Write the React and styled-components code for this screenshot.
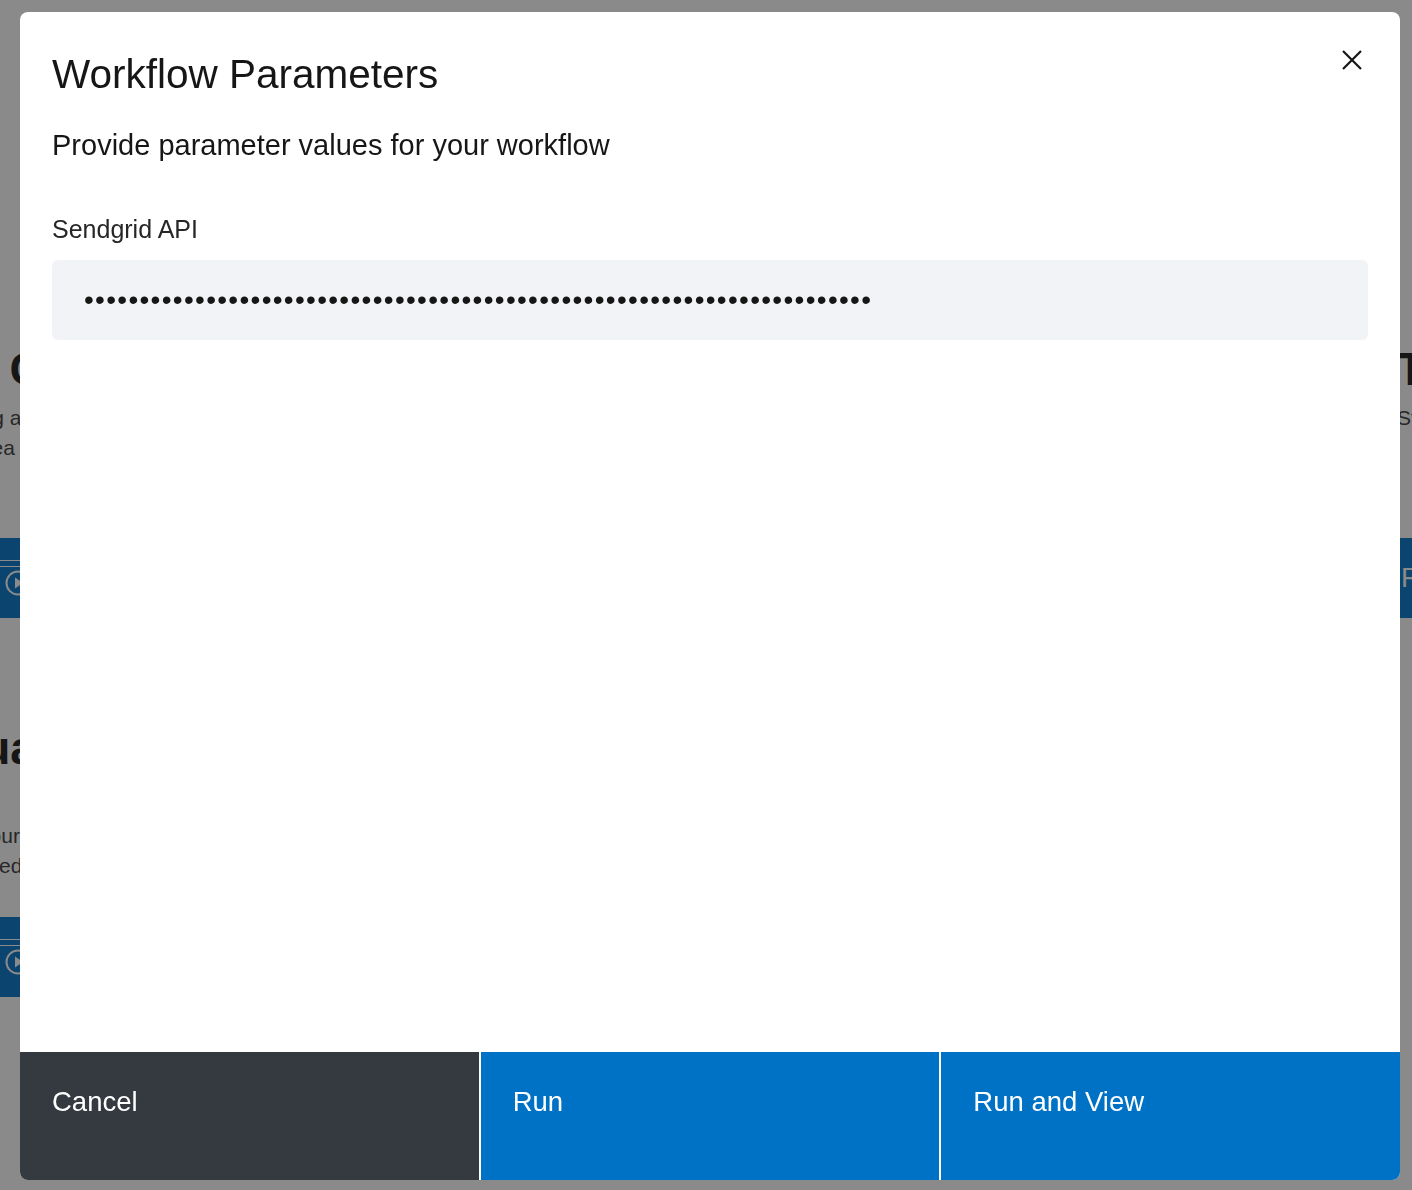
import React from 'react';
import styled, { createGlobalStyle } from 'styled-components';

const GlobalStyle = createGlobalStyle`
  html, body { margin: 0; padding: 0; }
  body {
    font-family: "Liberation Sans", Arial, sans-serif;
    color: #161616;
    background: #fff;
    overflow: hidden;
  }
  * { box-sizing: border-box; }
`;

// page behind the dialog, only its edges show
const Page = styled.div`
  width: 100vw;
  height: 100vh;
  overflow: hidden;
  display: flex;
  justify-content: center;
  gap: 24px;
  padding-top: 334px;
`;

const Column = styled.div`
  flex: 0 0 ${props => props.$width}px;
  min-width: 0;
  display: flex;
  flex-direction: column;
  gap: 95px;
`;

const Card = styled.div`
  height: 284px;
  display: flex;
  flex-direction: column;
`;

const CardTitle = styled.h3`
  margin: 0;
  padding: 7px 20px 0;
  font-size: 46px;
  line-height: 56px;
  font-weight: 700;
  white-space: nowrap;
  color: #161616;
`;

const CardText = styled.p`
  margin: ${props => props.$lead}px 0 0;
  padding: 0 6px 0 20px;
  font-size: 21px;
  line-height: 30px;
  color: #393939;
`;

const CardButton = styled.a`
  margin-top: auto;
  height: 80px;
  background: #0072c6;
  color: #fff;
  font-size: 27.5px;
  display: flex;
  flex-direction: column;
  text-decoration: none;
`;

const Rule = styled.span`
  display: block;
  height: ${props => props.$h}px;
  margin-top: ${props => props.$top}px;
  background: #fff;
`;

const CardButtonRow = styled.span`
  flex: 1;
  display: flex;
  align-items: center;
  justify-content: space-between;
  padding: 0 4px ${props => props.$lift || 0}px 24px;
`;

const Overlay = styled.div`
  position: fixed;
  inset: 0;
  background: rgba(22, 22, 22, 0.5);
  display: flex;
  padding: 12px 12px 10px 20px;
`;

const Modal = styled.div`
  flex: 1;
  background: #fff;
  border-radius: 8px;
  display: flex;
  flex-direction: column;
  overflow: hidden;
`;

const Header = styled.div`
  display: flex;
  justify-content: space-between;
  align-items: flex-start;
  padding: 24px 24px 0 32px;
`;

const Title = styled.h2`
  margin: 14px 0 0;
  font-size: 40.5px;
  line-height: 48px;
  font-weight: 400;
  color: #161616;
`;

const CloseButton = styled.button`
  width: 48px;
  height: 48px;
  padding: 0;
  border: 0;
  background: none;
  display: flex;
  align-items: center;
  justify-content: center;
  cursor: pointer;
`;

const Body = styled.div`
  flex: 1;
  padding: 0 32px;
`;

const Subtitle = styled.p`
  margin: 29px 0 0;
  font-size: 29px;
  line-height: 36px;
  color: #161616;
`;

const Label = styled.label`
  display: block;
  margin-top: 51px;
  font-size: 25px;
  line-height: 30px;
  color: #262626;
`;

const Field = styled.input`
  display: block;
  width: 100%;
  height: 80px;
  margin-top: 16px;
  padding: 0 32px;
  border: 0;
  border-radius: 6px;
  background: #f2f3f6;
  font-family: "Liberation Sans", Arial, sans-serif;
  font-size: 28px;
  letter-spacing: 1.3px;
  color: #161616;
  outline: none;
`;

const Footer = styled.div`
  display: flex;
  gap: 2px;
  height: 128px;
`;

const FooterButton = styled.button`
  flex: 1;
  border: 0;
  margin: 0;
  padding: 33px 32px 0;
  text-align: left;
  align-self: stretch;
  display: flex;
  align-items: flex-start;
  background: ${props => (props.$kind === 'secondary' ? '#343a40' : '#0072c6')};
  color: #fff;
  font-family: "Liberation Sans", Arial, sans-serif;
  font-size: 27.5px;
  line-height: 34px;
  cursor: pointer;
`;

const CloseIcon = () => (
  <svg width="22" height="22" viewBox="0 0 22 22" fill="none">
    <path d="M2 2 L20 20 M20 2 L2 20" stroke="#161616" strokeWidth="2.2" />
  </svg>
);

const PlayIcon = () => (
  <svg width="26" height="26" viewBox="0 0 26 26" fill="none">
    <circle cx="13" cy="13" r="11.5" stroke="#fff" strokeWidth="2" />
    <path d="M10 7.5 L18 13 L10 18.5 Z" fill="#fff" />
  </svg>
);

const TutorialButton = () => (
  <CardButton href="#">
    <Rule $h={2} $top={22} />
    <Rule $h={3} $top={6} />
    <CardButtonRow $lift={19}>
      <span>Watch the tutorial</span>
      <PlayIcon />
    </CardButtonRow>
  </CardButton>
);

const apiKey = 'SG.x7Yq2LmPp9RtVw4NcKd8Ab.Hs3QeUf6JvBn1ZgTk5MoXr0WyCiLa2DpEs9FuGh7Ij4Kl';

export default function App() {
  return (
    <>
      <GlobalStyle />
      <Page>
        <Column $width={600}>
          <Card>
            <CardTitle>Manage All the Workflow Cycles</CardTitle>
            <CardText $lead={6}>
              Track each execution in real time with detailed step logging a
              clear history, so you can then retry a failed stage in any area
              of the workflow.
            </CardText>
            <TutorialButton />
          </Card>
          <Card>
            <CardTitle>Connect Apps to Individual Services</CardTitle>
            <CardText $lead={45}>
              Store credentials for each service once and use them in your
              own steps and keep them secure, encrypted and fully rotated on
              a schedule.
            </CardText>
            <TutorialButton />
          </Card>
        </Column>
        <Column $width={1294} />
        <Column $width={600}>
          <Card>
            <CardTitle>Templates</CardTitle>
            <CardText $lead={6}>Start from a prebuilt workflow.</CardText>
            <CardButton href="#">
              <CardButtonRow>
                <span>Find templates</span>
              </CardButtonRow>
            </CardButton>
          </Card>
        </Column>
      </Page>

      <Overlay>
        <Modal role="dialog" aria-label="Workflow Parameters">
          <Header>
            <Title>Workflow Parameters</Title>
            <CloseButton aria-label="Close">
              <CloseIcon />
            </CloseButton>
          </Header>
          <Body>
            <Subtitle>Provide parameter values for your workflow</Subtitle>
            <Label htmlFor="sendgrid">Sendgrid API</Label>
            <Field id="sendgrid" type="password" defaultValue={apiKey} readOnly />
          </Body>
          <Footer>
            <FooterButton $kind="secondary">Cancel</FooterButton>
            <FooterButton>Run</FooterButton>
            <FooterButton>Run and View</FooterButton>
          </Footer>
        </Modal>
      </Overlay>
    </>
  );
}
